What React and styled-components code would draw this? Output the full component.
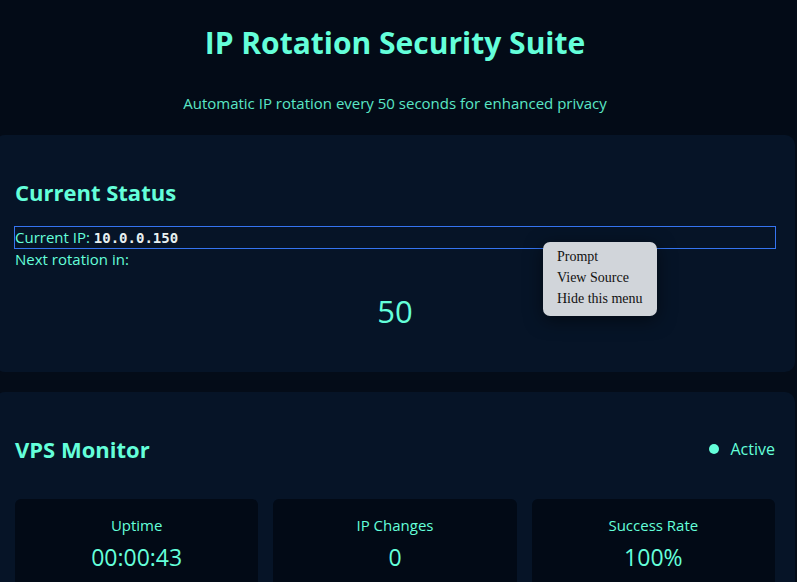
import React from 'react';
import styled, {createGlobalStyle} from 'styled-components';

const GlobalStyle = createGlobalStyle`
  body {
    margin: 0;
    background: #040c18;
    font-family: "Open Sans", "Noto Sans", sans-serif;
    color: #64ffda;
    overflow: hidden;
  }
`;

const Page = styled.div`
  width: 800px;
  margin-left: -5px;
`;

const Header = styled.header`
  height: 135px;
  box-sizing: border-box;
  padding-top: 22px;
  text-align: center;
  background: #030b17;
`;

const Title = styled.h1`
  margin: 0;
  font-size: 30px;
  font-weight: 700;
  color: #64ffda;
`;

const Subtitle = styled.p`
  margin: 30px 0 0;
  font-size: 15px;
  color: #64ffda;
  opacity: 0.9;
`;

const Card = styled.section`
  position: relative;
  background: #061427;
  border-radius: 10px;
  padding: 20px;
  margin-bottom: 20px;
  min-height: ${p => p.$minHeight || 'auto'};
  box-sizing: border-box;
`;

const CardHead = styled.div`
  display: flex;
  align-items: center;
  justify-content: space-between;
  margin-top: ${p => p.$top};
`;

const Heading = styled.h2`
  margin: 0;
  font-size: 22px;
  font-weight: 700;
  color: #64ffda;
`;

const IpRow = styled.div`
  margin-top: 20px;
  font-size: 15px;
  line-height: 20px;
  outline: 1px solid #3574f0;
`;

const IpValue = styled.code`
  font-family: "DejaVu Sans Mono", "Liberation Mono", monospace;
  font-weight: 700;
  font-size: 14px;
  color: #e8f0f0;
`;

const Line = styled.div`
  font-size: 15px;
  line-height: 20px;
  margin-top: 1px;
`;

const Countdown = styled.div`
  text-align: center;
  font-size: 31px;
  margin-top: 21px;
`;

const Status = styled.div`
  display: flex;
  align-items: center;
  gap: 12px;
  font-size: 16px;
`;

const Dot = styled.span`
  width: 10px;
  height: 10px;
  border-radius: 50%;
  background: #64ffda;
`;

const Stats = styled.div`
  display: grid;
  grid-template-columns: repeat(3, 1fr);
  gap: 15px;
  margin-top: 35px;
`;

const StatBox = styled.div`
  background: #020a16;
  border-radius: 6px;
  padding: 16px 10px;
  text-align: center;
`;

const StatLabel = styled.div`
  font-size: 15px;
`;

const StatValue = styled.div`
  font-size: 23px;
  margin-top: 6px;
`;

const Menu = styled.ul`
  position: absolute;
  left: 548px;
  top: 107px;
  margin: 0;
  padding: 4px 14px 7px;
  list-style: none;
  background: #d1d5da;
  border-radius: 7px;
  box-shadow: 0 4px 18px rgba(0, 0, 0, 0.5);
  font-family: "Liberation Serif", serif;
  font-size: 14px;
  line-height: 21px;
  color: #111;
  z-index: 2;
`;

const stats = [
    {label: 'Uptime', value: '00:00:43'},
    {label: 'IP Changes', value: '0'},
    {label: 'Success Rate', value: '100%'},
];

export default function App() {
    return (
        <Page>
            <GlobalStyle/>
            <Header>
                <Title>IP Rotation Security Suite</Title>
                <Subtitle>Automatic IP rotation every 50 seconds for enhanced privacy</Subtitle>
            </Header>

            <Card $minHeight="237px">
                <CardHead $top="22px">
                    <Heading>Current Status</Heading>
                </CardHead>
                <IpRow>Current IP: <IpValue>10.0.0.150</IpValue></IpRow>
                <Line>Next rotation in:</Line>
                <Countdown>50</Countdown>
                <Menu>
                    <li>Prompt</li>
                    <li>View Source</li>
                    <li>Hide this menu</li>
                </Menu>
            </Card>

            <Card>
                <CardHead $top="22px">
                    <Heading>VPS Monitor</Heading>
                    <Status><Dot/>Active</Status>
                </CardHead>
                <Stats>
                    {stats.map(s => (
                        <StatBox key={s.label}>
                            <StatLabel>{s.label}</StatLabel>
                            <StatValue>{s.value}</StatValue>
                        </StatBox>
                    ))}
                </Stats>
            </Card>
        </Page>
    );
}
